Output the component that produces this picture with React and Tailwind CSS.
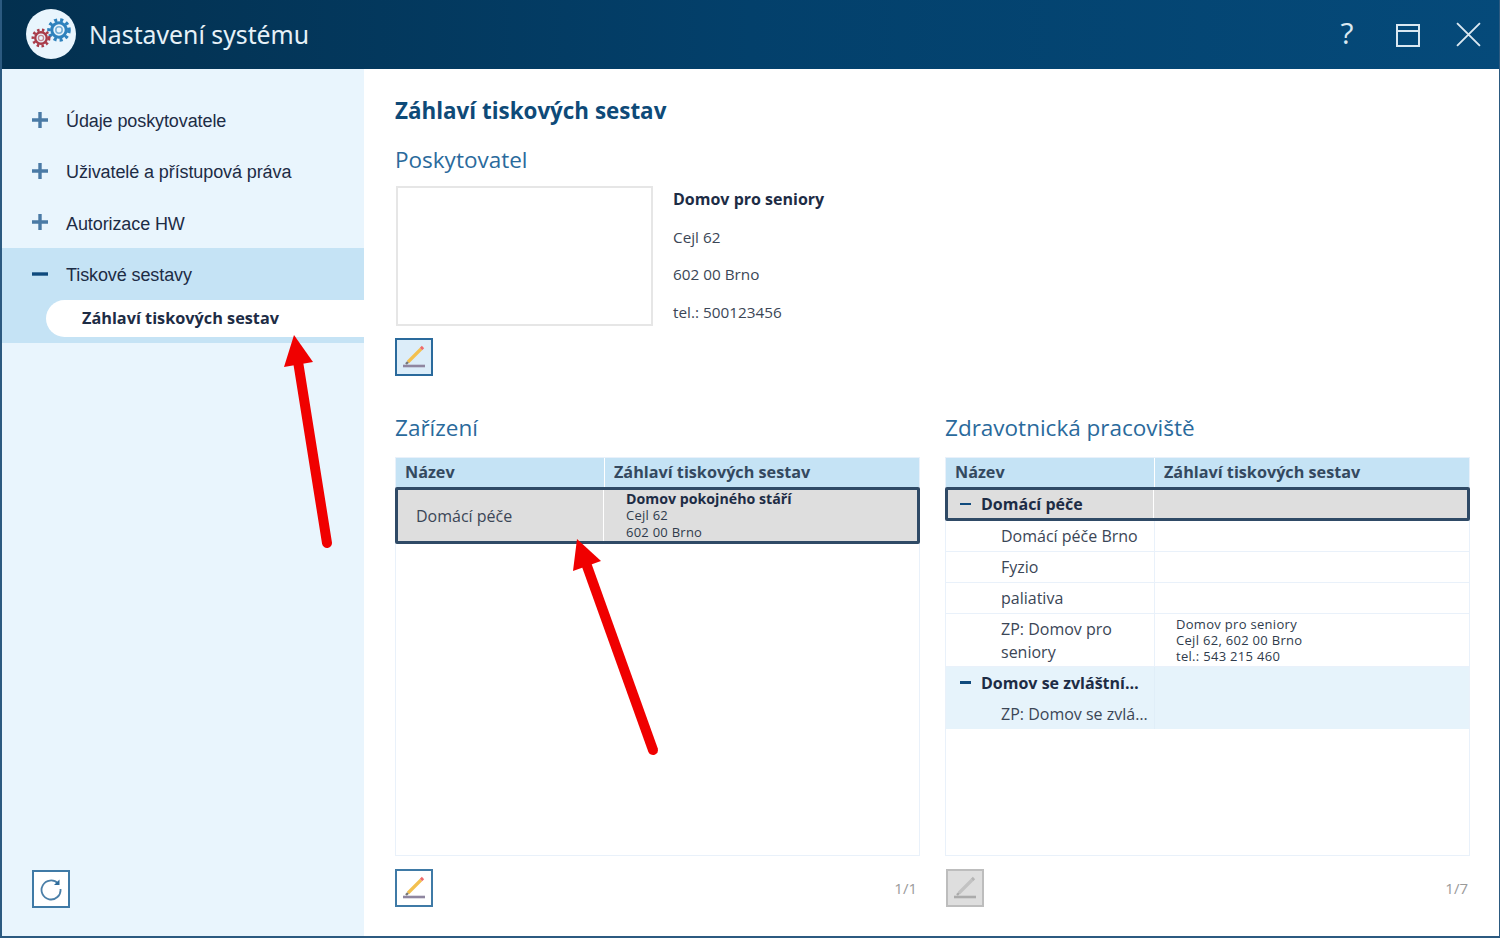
import React from 'react';

const Gear = ({ cx, cy, r, color }) => (
  <g fill="none" stroke={color}>
    <circle cx={cx} cy={cy} r={r} strokeWidth={r * 0.36} strokeDasharray={`${r * 0.3} ${r * 0.3}`} />
    <circle cx={cx} cy={cy} r={r * 0.72} strokeWidth={r * 0.3} />
    <circle cx={cx} cy={cy} r={r * 0.32} strokeWidth={r * 0.16} strokeOpacity="0.6" />
  </g>
);

const Logo = () => (
  <div className="w-[50px] h-[50px] -mt-px rounded-full bg-[#e9f5fd] shrink-0">
    <svg viewBox="0 0 50 50" className="w-full h-full">
      <Gear cx={33} cy={21} r={10} color="#2f82bd" />
      <Gear cx={15} cy={29} r={8} color="#a93c4a" />
    </svg>
  </div>
);

const MenuItem = ({ label, open }) => (
  <div className={`${open ? 'h-[52px]' : 'h-[51.33px]'} flex items-center pl-[29px]`}>
    <svg viewBox="0 0 18 18" className="w-[18px] h-[18px] shrink-0">
      <path d={open ? 'M1 9h16' : 'M1 9h16M9 1v16'} stroke={open ? '#0f4a7d' : '#4a7aa5'} strokeWidth="3.4" />
    </svg>
    <span className="ml-[17px] mt-[4px] font-['Liberation_Sans',sans-serif] text-[18px] text-[#1d2c45] tracking-[-0.1px]">{label}</span>
  </div>
);

const EditButton = ({ disabled, filled }) => (
  <button
    className={`w-[38px] h-[38px] flex items-center justify-center border-2 ${disabled ? 'border-[#bdbdbd] bg-[#dedede]' : filled ? 'border-[#2a6a9c] bg-[#dcedf9]' : 'border-[#3f7aa6] bg-white'}`}
  >
    <svg viewBox="0 0 38 38" className="w-[38px] h-[38px] shrink-0">
      <path d="M13 24L26 11" stroke={disabled ? '#c2c2c2' : '#f3c04f'} strokeWidth="3.2" />
      <path d="M26 11l2-2" stroke={disabled ? '#b5b5b5' : '#ef6a6a'} strokeWidth="3.2" />
      <path d="M13 24l-2 2" stroke={disabled ? '#aaa' : '#777'} strokeWidth="2.4" />
      <path d="M8 28h22" stroke={disabled ? '#ababab' : '#8f86a0'} strokeWidth="2.6" />
    </svg>
  </button>
);

const TableHead = () => (
  <div className="flex h-[29px] bg-[#c5e3f5] font-bold text-[16.2px] text-[#34495f] leading-[29px] shrink-0">
    <div className="w-[209px] pl-[9px] border-r border-white">Název</div>
    <div className="flex-1 pl-[9px]">Záhlaví tiskových sestav</div>
  </div>
);

const Row = ({ name, bold, minus, tint, children, h = 'h-[31px]' }) => (
  <div className={`flex ${h} ${tint ? 'bg-[#e6f3fb]' : 'border-b border-[#e9f1fa]'} text-[16px] text-[#3b4656]`}>
    <div className={`w-[209px] shrink-0 flex items-center border-r ${tint ? 'border-[#e0eef8]' : 'border-[#e9f1fa]'} ${bold ? 'pl-[14px]' : 'pl-[55px] pr-1'}`}>
      {minus && <span className="w-[11px] h-[2.5px] bg-[#0f4a7d] mr-[10px] shrink-0"></span>}
      <span className={bold ? 'font-bold text-[#1d2c45]' : 'leading-[23px]'}>{name}</span>
    </div>
    <div className="flex-1 pl-[21px] text-[13px] leading-[16px] flex flex-col justify-center tracking-[0.3px] text-[#2f3b4c]">{children}</div>
  </div>
);

const Arrow = ({ tip, left, right, tail }) => (
  <svg className="absolute left-0 top-0 w-[1500px] h-[938px] pointer-events-none" viewBox="0 0 1500 938">
    <path d={`M${(left[0] + right[0]) / 2} ${(left[1] + right[1]) / 2}L${tail[0]} ${tail[1]}`} stroke="#f00000" strokeWidth="10" strokeLinecap="round" />
    <path d={`M${tip[0]} ${tip[1]}L${left[0]} ${left[1]}L${right[0]} ${right[1]}Z`} fill="#f00000" />
  </svg>
);

const App = () => {
  return (
    <div className="relative w-[1500px] h-[938px] overflow-hidden bg-white flex flex-col border-l-2 border-r border-b-2 border-[#2c5a80] font-['Open_Sans',sans-serif]">
      {/* title bar */}
      <div className="h-[69px] -ml-[2px] -mr-[1px] shrink-0 flex items-center bg-gradient-to-r from-[#03304f] via-[#03406b] to-[#054a7a] pl-[26px]">
        <Logo />
        <span className="ml-[13px] text-[24.8px] text-[#e6f1f8] font-['Noto_Sans',sans-serif]">Nastavení systému</span>
        <div className="ml-auto flex items-center text-[#dbe8f1]">
          <span className="text-[30px] font-normal leading-none w-[20px] text-center mr-[39px] -mt-[3px]">?</span>
          <svg viewBox="0 0 24 24" className="w-[24px] h-[24px] mr-[36px]" fill="none" stroke="currentColor" strokeWidth="2">
            <path d="M1 2h22v21H1zM1 8h22" />
          </svg>
          <svg viewBox="0 0 24 24" className="w-[25px] h-[25px] mr-[19px]" fill="none" stroke="currentColor" strokeWidth="1.8">
            <path d="M1 1l22 22M23 1L1 23" />
          </svg>
        </div>
      </div>

      <div className="flex flex-1 min-h-0">
        {/* sidebar */}
        <div className="w-[362px] shrink-0 bg-[#e9f5fd] flex flex-col pt-[25px] pb-[28px]">
          <MenuItem label="Údaje poskytovatele" />
          <MenuItem label="Uživatelé a přístupová práva" />
          <MenuItem label="Autorizace HW" />
          <div className="bg-[#c5e3f5] pb-[6px]">
            <MenuItem label="Tiskové sestavy" open />
            <div className="ml-[44px] h-[37px] bg-white rounded-l-full flex items-center pl-[36px] font-bold text-[16.25px] text-[#1d2c45]">
              Záhlaví tiskových sestav
            </div>
          </div>
          <button className="mt-auto ml-[30px] w-[38px] h-[38px] border-2 border-[#3f7aa6] bg-white flex items-center justify-center">
            <svg viewBox="0 0 24 24" className="w-[24px] h-[24px]" fill="none" stroke="#4a7fa8" strokeWidth="1.8">
              <path d="M19 6.5A9.5 9.5 0 1 0 21.5 12" />
              <path d="M20.5 2.5v5.5h-5.5z" fill="#2f6c9b" stroke="none" />
            </svg>
          </button>
        </div>

        {/* content */}
        <div className="flex-1 min-w-0 pl-[31px] pr-[29px] flex flex-col text-[#3b4656]">
          <h1 className="mt-[25px] h-[34px] leading-[34px] text-[22.4px] font-bold text-[#0e4a78]">Záhlaví tiskových sestav</h1>
          <h2 className="mt-[15px] h-[34px] leading-[34px] text-[22.5px] text-[#2a6a9c]">Poskytovatel</h2>
          <div className="flex mt-[9px]">
            <div className="ml-px w-[257px] h-[140px] border-2 border-[#e6e6e6] shrink-0"></div>
            <div className="ml-[20px] -mt-[5px] text-[15.3px] leading-[37.5px]">
              <div className="font-bold text-[16px] text-[#1d2c45]">Domov pro seniory</div>
              <div>Cejl 62</div>
              <div>602 00 Brno</div>
              <div>tel.: 500123456</div>
            </div>
          </div>
          <div className="mt-[7px]">
            <EditButton filled />
          </div>

          <div className="flex gap-[25px] mt-[35px]">
            <h2 className="flex-1 h-[34px] leading-[34px] text-[22.5px] text-[#2a6a9c]">Zařízení</h2>
            <h2 className="flex-1 h-[34px] leading-[34px] text-[22.5px] text-[#2a6a9c]">Zdravotnická pracoviště</h2>
          </div>

          <div className="flex gap-[25px] mt-[12px]">
            <div className="flex-1 h-[399px] border border-[#e9f1fa] flex flex-col">
              <TableHead />
              <div className="relative flex h-[57px] bg-[#dedede] border-[3px] border-[#2f4a66] -mx-px rounded-[2px] text-[16px] text-[#3b4656]">
                <div className="w-[206px] flex items-center pl-[18px] border-r border-white">Domácí péče</div>
                <div className="flex-1 pl-[22px] text-[13px] leading-[16.5px] flex flex-col justify-center tracking-[0.25px] text-[#2f3b4c]">
                  <div className="font-bold text-[14.2px] text-[#1d2c45] tracking-normal">Domov pokojného stáří</div>
                  <div>Cejl 62</div>
                  <div>602 00 Brno</div>
                </div>
              </div>
            </div>

            <div className="flex-1 h-[399px] border border-[#e9f1fa] flex flex-col">
              <TableHead />
              <div className="flex h-[34px] shrink-0 bg-[#dedede] border-[3px] border-[#2f4a66] -mx-px rounded-[2px] text-[16px] font-bold text-[#1d2c45]">
                <div className="w-[206px] flex items-center pl-[12px] border-r border-white">
                  <span className="w-[11px] h-[2.5px] bg-[#0f4a7d] mr-[10px]"></span>
                  Domácí péče
                </div>
              </div>
              <Row name="Domácí péče Brno" />
              <Row name="Fyzio" />
              <Row name="paliativa" />
              <Row name={<span className="block mt-[2px]">ZP: Domov pro<br />seniory</span>} h="h-[53px]">
                <div>Domov pro seniory</div>
                <div>Cejl 62, 602 00 Brno</div>
                <div>tel.: 543 215 460</div>
              </Row>
              <Row name="Domov se zvláštní…" bold minus tint />
              <Row name={<span className="block mt-[2px]">ZP: Domov se zvlá…</span>} tint />
            </div>
          </div>

          <div className="flex gap-[25px] mt-[13px]">
            <div className="flex-1 flex items-center justify-between pr-[4px]">
              <EditButton />
              <span className="text-[15px] text-[#9a9a9a]">1/1</span>
            </div>
            <div className="flex-1 flex items-center justify-between pr-[2px]">
              <EditButton disabled />
              <span className="text-[15px] text-[#9a9a9a]">1/7</span>
            </div>
          </div>
        </div>
      </div>

      {/* red annotation arrows */}
      <Arrow tip={[292, 335]} left={[282, 367]} right={[311, 362]} tail={[325, 543]} />
      <Arrow tip={[575, 539]} left={[571, 571]} right={[599, 561]} tail={[651, 750]} />
    </div>
  );
};

export default App;
